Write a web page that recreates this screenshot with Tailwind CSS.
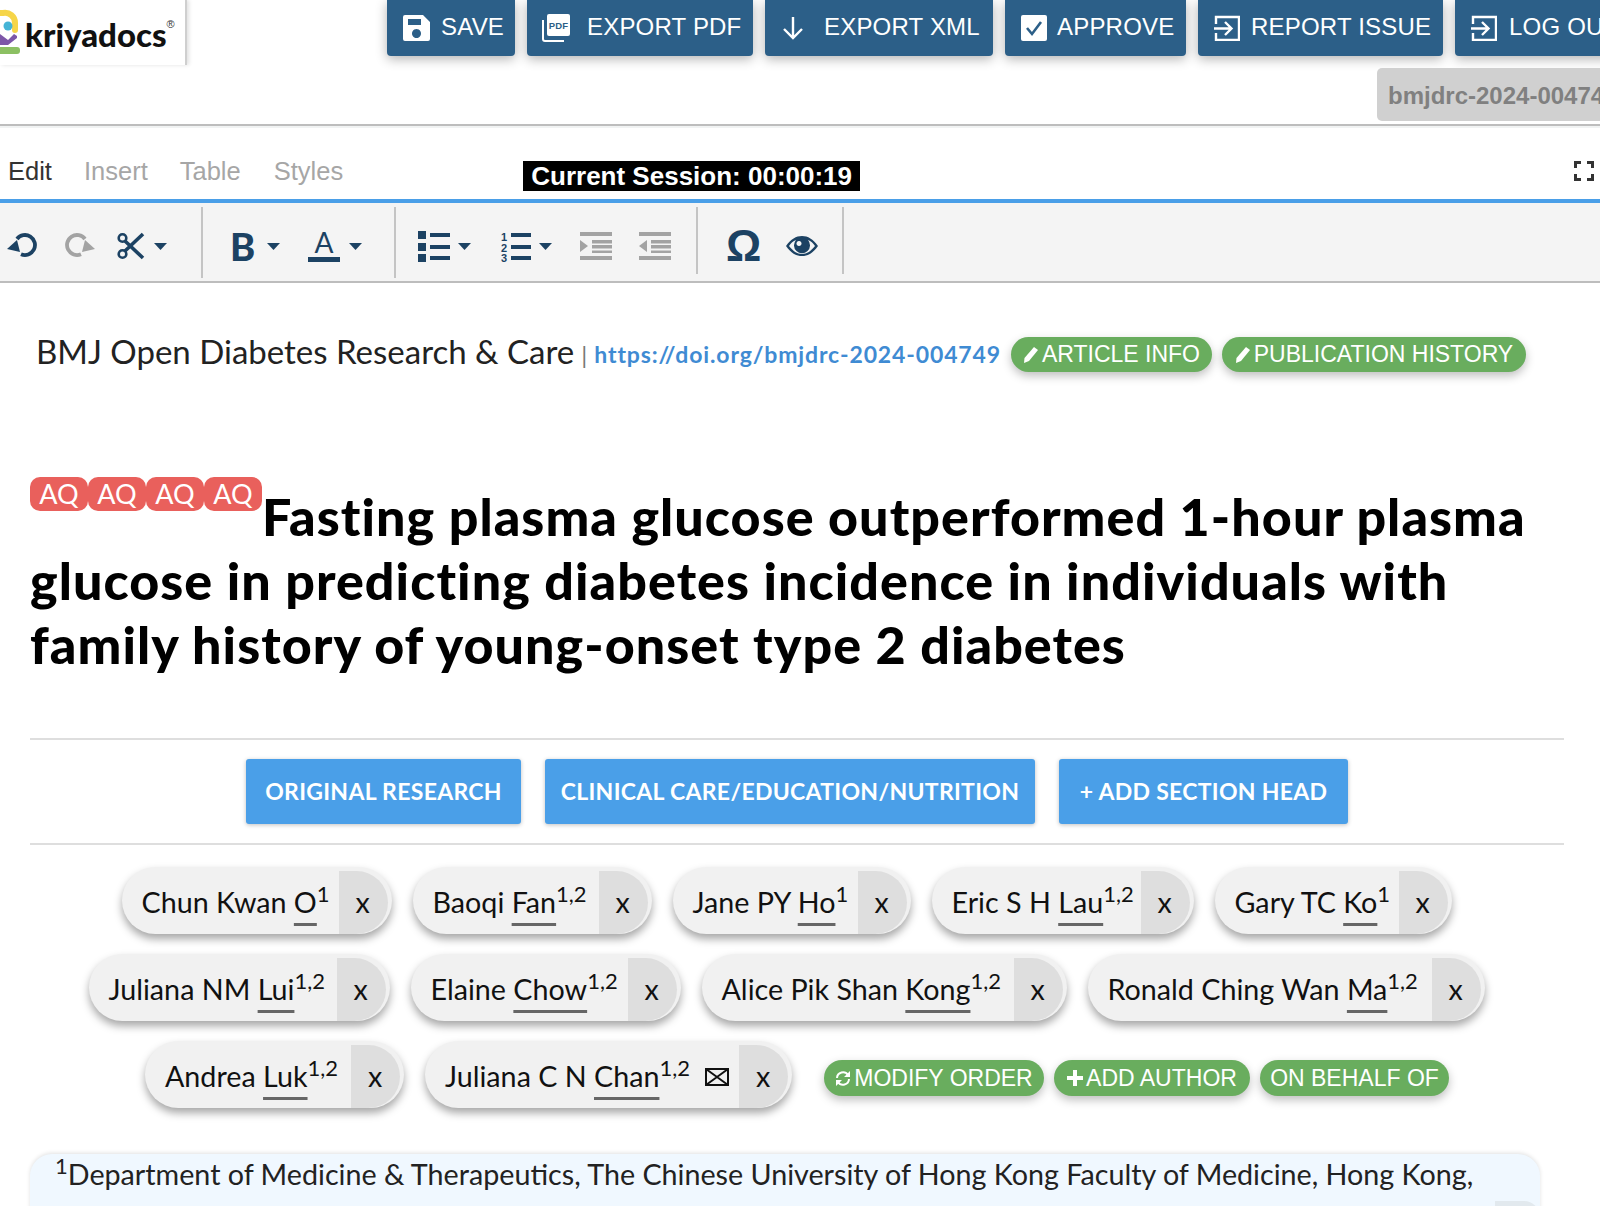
<!DOCTYPE html>
<html lang="en">
<head>
    <meta charset="UTF-8">
    <meta name="viewport" content="width=device-width, initial-scale=1.0">
    <title>Kriyadocs</title>
    <script src="https://cdn.jsdelivr.net/npm/@tailwindcss/browser@4"></script>
</head>
<body class="h-[1206px] overflow-hidden bg-white font-['Lato',sans-serif]">
    <!-- top bar -->
    <header class="h-[124px] flex items-start overflow-hidden font-['Liberation_Sans',sans-serif]">
        <div class="w-[187px] h-[65px] shrink-0 border-r-2 border-[#cfcfcf] shadow-[2px_0_4px_rgba(0,0,0,0.12)] flex items-start">
            <svg width="24" height="56" viewBox="0 0 24 56" class="shrink-0">
                <path d="M0 13 H3 A10 10 0 0 1 15 23 V30" fill="none" stroke="#f6d549" stroke-width="6" stroke-linecap="round"/>
                <circle cx="8" cy="26" r="4.5" fill="#45b4d6"/>
                <path d="M0 34 L8 40 L14 34 L17 36 V38 L8 45 H0 Z" fill="#7d57a8"/>
                <rect x="-6" y="47" width="26" height="7" rx="3" fill="#8cc063"/>
            </svg>
            <span class="ml-[1px] mt-[12px] text-[33px] leading-[44px] font-black text-[#111] font-['Lato',sans-serif]">kriyadocs</span>
            <span class="text-[11px] mt-[16px] text-[#333]">®</span>
        </div>
        <div class="flex gap-3 ml-[200px] shrink-0 text-white text-[24px] tracking-[0.2px]">
            <button class="h-14 w-[128px] flex items-center pb-[2px] pl-4 gap-[11px] bg-[#2c5f88] rounded-b-[4px] shadow-[0_3px_12px_rgba(0,0,0,0.3)]">
                <svg width="27" height="26" viewBox="0 0 27 26" class="mt-[2px]"><path fill="#fff" fill-rule="evenodd" d="M2 0H20L27 7V24a2 2 0 0 1-2 2H2a2 2 0 0 1-2-2V2a2 2 0 0 1 2-2zM5 4V10H18V4zM13.5 14a4.5 4.5 0 1 0 .01 0z"/></svg>
                SAVE
            </button>
            <button class="h-14 w-[226px] flex items-center pb-[2px] pl-[15px] gap-[17px] bg-[#2c5f88] rounded-b-[4px] shadow-[0_3px_12px_rgba(0,0,0,0.3)]">
                <svg width="28" height="28" viewBox="0 0 28 28" class="mt-[2px]"><path d="M1 6V25a2 2 0 0 0 2 2H22" fill="none" stroke="#fff" stroke-width="2"/><rect x="5" y="0" width="23" height="22" rx="2" fill="#fff"/><text x="16.5" y="15" text-anchor="middle" font-size="9.5" font-weight="700" fill="#2c5f88" font-family="Liberation Sans">PDF</text></svg>
                EXPORT PDF
            </button>
            <button class="h-14 w-[228px] flex items-center pb-[2px] pl-[18px] gap-[21px] bg-[#2c5f88] rounded-b-[4px] shadow-[0_3px_12px_rgba(0,0,0,0.3)]">
                <svg width="20" height="24" viewBox="0 0 20 24" class="mt-[2px]"><path d="M10 1V22M1 13L10 22L19 13" fill="none" stroke="#fff" stroke-width="2.4"/></svg>
                EXPORT XML
            </button>
            <button class="h-14 w-[181px] flex items-center pb-[2px] pl-4 gap-[10px] bg-[#2c5f88] rounded-b-[4px] shadow-[0_3px_12px_rgba(0,0,0,0.3)]">
                <svg width="26" height="26" viewBox="0 0 26 26" class="mt-[2px]"><rect width="26" height="26" rx="2" fill="#fff"/><path d="M6 13L11 19L20 7" fill="none" stroke="#2c5f88" stroke-width="2.6"/></svg>
                APPROVE
            </button>
            <button class="h-14 w-[245px] flex items-center pb-[2px] pl-4 gap-[11px] bg-[#2c5f88] rounded-b-[4px] shadow-[0_3px_12px_rgba(0,0,0,0.3)]">
                <svg width="26" height="26" viewBox="0 0 26 26" class="mt-[2px]"><path d="M2 9V2H25V25H2V18M0 13.500H17M11 7L17.500 13.500L11 20" fill="none" stroke="#fff" stroke-width="2.4"/></svg>
                REPORT ISSUE
            </button>
            <button class="h-14 flex items-center pb-[2px] pl-4 pr-[14px] gap-3 bg-[#2c5f88] rounded-b-[4px] shadow-[0_3px_12px_rgba(0,0,0,0.3)]">
                <svg width="26" height="26" viewBox="0 0 26 26" class="mt-[2px]"><path d="M2 9V2H25V25H2V18M0 13.500H17M11 7L17.500 13.500L11 20" fill="none" stroke="#fff" stroke-width="2.4"/></svg>
                LOG OUT
            </button>
        </div>
    </header>
    <div class="relative h-0">
        <div class="absolute left-[1377px] top-[-56px] h-[53px] w-[223px] pl-[11px] pt-[2px] flex items-center overflow-hidden bg-[#d0d0d0] rounded-l-[5px] text-[24px] font-bold text-[#808080] font-['Liberation_Sans',sans-serif] whitespace-nowrap">bmjdrc-2024-004749</div>
    </div>
    <div class="h-1 border-t-2 border-[#bdbdbd] bg-[#f1f3f3]"></div>

    <!-- tabs -->
    <div class="h-[71px] flex items-start font-['Liberation_Sans',sans-serif] text-[25.5px] text-[#a6a6a6]">
        <span class="ml-[8px] mt-[24px] text-[#333]">Edit</span>
        <span class="ml-[32px] mt-[24px]">Insert</span>
        <span class="ml-[32px] mt-[24px]">Table</span>
        <span class="ml-[33px] mt-[24px]">Styles</span>
        <span class="ml-[180px] mt-[33px] h-[30px] w-[337px] flex items-center justify-center bg-black text-white font-bold text-[26px]">Current Session: 00:00:19</span>
        <svg width="20" height="20" viewBox="0 0 20 20" class="ml-auto mr-[6px] mt-[33px]"><path d="M1.500 7V1.500H7M13 1.500H18.500V7M18.500 13V18.500H13M7 18.500H1.500V13" fill="none" stroke="#333" stroke-width="3"/></svg>
    </div>

    <!-- toolbar -->
    <div class="h-[84px] border-t-[4px] border-b-2 border-t-[#4a9fe8] border-b-[#bdbdbd] bg-[#f4f4f4] flex items-start">
        <div class="w-[201px] h-full pt-2 flex items-center">
            <svg width="30" height="26" viewBox="0 0 30 26" class="ml-[7px]"><path d="M10 6A10 10 0 1 1 14 21.200" fill="none" stroke="#1c4263" stroke-width="3.800"/><path d="M0 16L10 7L13 19Z" fill="#1c4263"/></svg>
            <svg width="30" height="26" viewBox="0 0 30 26" class="ml-[28px] -scale-x-100"><path d="M10 6A10 10 0 1 1 14 21.200" fill="none" stroke="#a3a3a3" stroke-width="3.800"/><path d="M0 16L10 7L13 19Z" fill="#a3a3a3"/></svg>
            <svg width="28" height="28" viewBox="0 0 28 28" class="ml-[22px]"><circle cx="5.500" cy="6" r="3.800" fill="none" stroke="#1c4263" stroke-width="2.600"/><circle cx="5.500" cy="22" r="3.800" fill="none" stroke="#1c4263" stroke-width="2.600"/><path d="M8 9L26 26M8 19L26 2" stroke="#1c4263" stroke-width="3.600"/></svg>
            <svg width="13" height="7" viewBox="0 0 13 7" class="ml-[9px]"><path d="M0 0H13L6.500 7Z" fill="#1c4263"/></svg>
        </div>
        <div class="w-[2px] h-[71px] mt-1 bg-[#c4c4c4]"></div>
        <div class="w-[191px] h-full pt-2 flex items-center">
            <span class="ml-[27px] w-[24px] text-[38px] leading-none font-black text-[#1c4263] font-['Lato',sans-serif]">B</span>
            <svg width="13" height="7" viewBox="0 0 13 7" class="ml-[13px]"><path d="M0 0H13L6.500 7Z" fill="#1c4263"/></svg>
            <span class="ml-[28px] w-[32px] pb-[2px] border-b-[5px] border-[#1c4263] text-center text-[28px] leading-[25px] text-[#1c4263]">A</span>
            <svg width="13" height="7" viewBox="0 0 13 7" class="ml-[9px]"><path d="M0 0H13L6.500 7Z" fill="#1c4263"/></svg>
        </div>
        <div class="w-[2px] h-[71px] mt-1 bg-[#c4c4c4]"></div>
        <div class="w-[300px] h-full pt-2 flex items-center">
            <svg width="32" height="31" viewBox="0 0 32 31" class="ml-[22px]"><path fill="#1c4263" d="M0 0H8V8H0zM0 12H8V20H0zM0 23H8V31H0zM12 2H32V6H12zM12 14H32V18H12zM12 25H32V29H12z"/></svg>
            <svg width="13" height="7" viewBox="0 0 13 7" class="ml-[8px]"><path d="M0 0H13L6.500 7Z" fill="#1c4263"/></svg>
            <svg width="30" height="31" viewBox="0 0 30 31" class="ml-[30px]"><text x="0" y="10" font-size="11" font-weight="700" fill="#1c4263" font-family="Liberation Sans">1</text><text x="0" y="20.500" font-size="11" font-weight="700" fill="#1c4263" font-family="Liberation Sans">2</text><text x="0" y="31" font-size="11" font-weight="700" fill="#1c4263" font-family="Liberation Sans">3</text><path fill="#1c4263" d="M10 2H30V6H10zM10 14H30V18H10zM10 25H30V29H10z"/></svg>
            <svg width="13" height="7" viewBox="0 0 13 7" class="ml-[8px]"><path d="M0 0H13L6.500 7Z" fill="#1c4263"/></svg>
            <svg width="32" height="28" viewBox="0 0 32 28" class="ml-[28px]"><path fill="#a3a3a3" d="M0 0H32V4H0zM12 8H32V11.500H12zM12 13H32V16.500H12zM12 18.500H32V21H12zM0 24H32V28H0zM0 8L8 14L0 20Z"/></svg>
            <svg width="32" height="28" viewBox="0 0 32 28" class="ml-[27px]"><path fill="#a3a3a3" d="M0 0H32V4H0zM12 8H32V11.500H12zM12 13H32V16.500H12zM12 18.500H32V21H12zM0 24H32V28H0zM8 8L0 14L8 20Z"/></svg>
        </div>
        <div class="w-[2px] h-[67px] mt-1 bg-[#c4c4c4]"></div>
        <div class="w-[144px] h-full pt-2 flex items-center">
            <span class="ml-[28px] w-[35px] text-center text-[44px] leading-none font-['Liberation_Sans',sans-serif] text-[#1c4263] font-bold">Ω</span>
            <svg width="32" height="20" viewBox="0 0 32 20" class="ml-[25px]"><path fill="#1c4263" fill-rule="evenodd" d="M0 10C5 3 10 0 16 0s11 3 16 10c-5 7-10 10-16 10S5 17 0 10zM3 10c4 5 8 8 13 8s9-3 13-8c-2-3-4-5-7-6a8 8 0 1 1-12 0c-3 1-5 3-7 6zM13 5a2.500 2.500 0 1 0 .01 0z"/></svg>
        </div>
        <div class="w-[2px] h-[67px] mt-1 bg-[#c4c4c4]"></div>
    </div>

    <main class="px-[30px]">
        <!-- journal line -->
        <div class="mt-[54px] pl-[6px] h-[35px] flex items-center whitespace-nowrap">
            <span class="text-[33px] text-[#222] mb-[5px]">BMJ Open Diabetes Research &amp; Care</span>
            <span class="ml-[7px] text-[24px] text-[#777]">|</span>
            <a class="ml-[7px] text-[23px] font-bold tracking-[0.87px] text-[#3f8bd3]">https://doi.org/bmjdrc-2024-004749</a>
            <button class="ml-[10px] h-[35px] w-[201px] flex items-center justify-center gap-[3px] rounded-full bg-[#69ad5e] text-white text-[23px] font-['Liberation_Sans',sans-serif] shadow-[0_4px_10px_rgba(0,0,0,0.25)]">
                <svg width="16" height="17" viewBox="0 0 16 17"><path d="M11 1L15 4L6 15L1 17L1.500 12Z" fill="#fff"/></svg>ARTICLE INFO
            </button>
            <button class="ml-[10px] h-[35px] w-[304px] flex items-center justify-center gap-[3px] rounded-full bg-[#69ad5e] text-white text-[23px] font-['Liberation_Sans',sans-serif] shadow-[0_4px_10px_rgba(0,0,0,0.25)]">
                <svg width="16" height="17" viewBox="0 0 16 17"><path d="M11 1L15 4L6 15L1 17L1.500 12Z" fill="#fff"/></svg>PUBLICATION HISTORY
            </button>
        </div>

        <!-- title -->
        <h1 class="mt-[105px] text-[52px] leading-[64px] tracking-[1.05px] font-black text-black">
            <span class="inline-flex align-[32px] tracking-normal font-normal text-[27px] leading-[34px] text-white"><span class="w-[58px] text-center rounded-[10px] bg-[#e9605c]">AQ</span><span class="w-[58px] text-center rounded-[10px] bg-[#e9605c]">AQ</span><span class="w-[58px] text-center rounded-[10px] bg-[#e9605c]">AQ</span><span class="w-[58px] text-center rounded-[10px] bg-[#e9605c]">AQ</span></span>Fasting plasma glucose outperformed 1-hour plasma glucose in predicting diabetes incidence in individuals with family history of young-onset type 2 diabetes
        </h1>

        <!-- section heads -->
        <div class="mt-[62px] w-[1534px] border-y-2 border-[#dedede] h-[107px] flex items-center justify-center gap-6 text-[23px] tracking-[0.3px] font-bold text-white">
            <button class="h-[65px] w-[275px] rounded-[3px] bg-[#4a9fe8] shadow-[0_1px_4px_rgba(0,0,0,0.25)]">ORIGINAL RESEARCH</button>
            <button class="h-[65px] w-[490px] rounded-[3px] bg-[#4a9fe8] shadow-[0_1px_4px_rgba(0,0,0,0.25)]">CLINICAL CARE/EDUCATION/NUTRITION</button>
            <button class="h-[65px] w-[289px] rounded-[3px] bg-[#4a9fe8] shadow-[0_1px_4px_rgba(0,0,0,0.25)]">+ ADD SECTION HEAD</button>
        </div>

        <!-- authors -->
        <div class="mt-[22px] w-[1534px] flex flex-wrap justify-center items-center gap-y-5 text-[28.7px] text-[#111]">
            <div class="mr-[21px] h-[67px] w-[270px] flex rounded-full bg-[#f1f1f1] pt-1 pr-1 shadow-[0_5px_8px_rgba(0,0,0,0.35)]"><span class="flex-1 pl-5 leading-[62px] whitespace-nowrap">Chun Kwan <span class="underline decoration-[#666] decoration-[3px] underline-offset-[10px] [text-decoration-skip-ink:none]">O</span><sup class="text-[22px]">1</sup></span><span class="w-[49px] shrink-0 bg-[#dedede] rounded-r-full pl-[17px] leading-[62px]">x</span></div>
            <div class="mr-[21px] h-[67px] w-[239px] flex rounded-full bg-[#f1f1f1] pt-1 pr-1 shadow-[0_5px_8px_rgba(0,0,0,0.35)]"><span class="flex-1 pl-5 leading-[62px] whitespace-nowrap">Baoqi <span class="underline decoration-[#666] decoration-[3px] underline-offset-[10px] [text-decoration-skip-ink:none]">Fan</span><sup class="text-[22px]">1,2</sup></span><span class="w-[49px] shrink-0 bg-[#dedede] rounded-r-full pl-[17px] leading-[62px]">x</span></div>
            <div class="mr-[21px] h-[67px] w-[238px] flex rounded-full bg-[#f1f1f1] pt-1 pr-1 shadow-[0_5px_8px_rgba(0,0,0,0.35)]"><span class="flex-1 pl-5 leading-[62px] whitespace-nowrap">Jane PY <span class="underline decoration-[#666] decoration-[3px] underline-offset-[10px] [text-decoration-skip-ink:none]">Ho</span><sup class="text-[22px]">1</sup></span><span class="w-[49px] shrink-0 bg-[#dedede] rounded-r-full pl-[17px] leading-[62px]">x</span></div>
            <div class="mr-[21px] h-[67px] w-[262px] flex rounded-full bg-[#f1f1f1] pt-1 pr-1 shadow-[0_5px_8px_rgba(0,0,0,0.35)]"><span class="flex-1 pl-5 leading-[62px] whitespace-nowrap">Eric S H <span class="underline decoration-[#666] decoration-[3px] underline-offset-[10px] [text-decoration-skip-ink:none]">Lau</span><sup class="text-[22px]">1,2</sup></span><span class="w-[49px] shrink-0 bg-[#dedede] rounded-r-full pl-[17px] leading-[62px]">x</span></div>
            <div class="mr-[21px] h-[67px] w-[237px] flex rounded-full bg-[#f1f1f1] pt-1 pr-1 shadow-[0_5px_8px_rgba(0,0,0,0.35)]"><span class="flex-1 pl-5 leading-[62px] whitespace-nowrap">Gary TC <span class="underline decoration-[#666] decoration-[3px] underline-offset-[10px] [text-decoration-skip-ink:none]">Ko</span><sup class="text-[22px]">1</sup></span><span class="w-[49px] shrink-0 bg-[#dedede] rounded-r-full pl-[17px] leading-[62px]">x</span></div>

            <div class="mr-[21px] h-[67px] w-[301px] flex rounded-full bg-[#f1f1f1] pt-1 pr-1 shadow-[0_5px_8px_rgba(0,0,0,0.35)]"><span class="flex-1 pl-5 leading-[62px] whitespace-nowrap">Juliana NM <span class="underline decoration-[#666] decoration-[3px] underline-offset-[10px] [text-decoration-skip-ink:none]">Lui</span><sup class="text-[22px]">1,2</sup></span><span class="w-[49px] shrink-0 bg-[#dedede] rounded-r-full pl-[17px] leading-[62px]">x</span></div>
            <div class="mr-[21px] h-[67px] w-[270px] flex rounded-full bg-[#f1f1f1] pt-1 pr-1 shadow-[0_5px_8px_rgba(0,0,0,0.35)]"><span class="flex-1 pl-5 leading-[62px] whitespace-nowrap">Elaine <span class="underline decoration-[#666] decoration-[3px] underline-offset-[10px] [text-decoration-skip-ink:none]">Chow</span><sup class="text-[22px]">1,2</sup></span><span class="w-[49px] shrink-0 bg-[#dedede] rounded-r-full pl-[17px] leading-[62px]">x</span></div>
            <div class="mr-[21px] h-[67px] w-[365px] flex rounded-full bg-[#f1f1f1] pt-1 pr-1 shadow-[0_5px_8px_rgba(0,0,0,0.35)]"><span class="flex-1 pl-5 leading-[62px] whitespace-nowrap">Alice Pik Shan <span class="underline decoration-[#666] decoration-[3px] underline-offset-[10px] [text-decoration-skip-ink:none]">Kong</span><sup class="text-[22px]">1,2</sup></span><span class="w-[49px] shrink-0 bg-[#dedede] rounded-r-full pl-[17px] leading-[62px]">x</span></div>
            <div class="mr-[21px] h-[67px] w-[397px] flex rounded-full bg-[#f1f1f1] pt-1 pr-1 shadow-[0_5px_8px_rgba(0,0,0,0.35)]"><span class="flex-1 pl-5 leading-[62px] whitespace-nowrap">Ronald Ching Wan <span class="underline decoration-[#666] decoration-[3px] underline-offset-[10px] [text-decoration-skip-ink:none]">Ma</span><sup class="text-[22px]">1,2</sup></span><span class="w-[49px] shrink-0 bg-[#dedede] rounded-r-full pl-[17px] leading-[62px]">x</span></div>

            <div class="mr-[21px] h-[67px] w-[259px] flex rounded-full bg-[#f1f1f1] pt-1 pr-1 shadow-[0_5px_8px_rgba(0,0,0,0.35)]"><span class="flex-1 pl-5 leading-[62px] whitespace-nowrap">Andrea <span class="underline decoration-[#666] decoration-[3px] underline-offset-[10px] [text-decoration-skip-ink:none]">Luk</span><sup class="text-[22px]">1,2</sup></span><span class="w-[49px] shrink-0 bg-[#dedede] rounded-r-full pl-[17px] leading-[62px]">x</span></div>
            <div class="mr-[21px] h-[67px] w-[367px] flex rounded-full bg-[#f1f1f1] pt-1 pr-1 shadow-[0_5px_8px_rgba(0,0,0,0.35)]"><span class="flex-1 pl-5 leading-[62px] whitespace-nowrap">Juliana C N <span class="underline decoration-[#666] decoration-[3px] underline-offset-[10px] [text-decoration-skip-ink:none]">Chan</span><sup class="text-[22px]">1,2</sup></span>
                <svg width="24" height="18" viewBox="0 0 24 18" class="self-center mr-[10px]"><path d="M1 1H23V17H1zM1 1L23 17M23 1L1 17" fill="none" stroke="#111" stroke-width="2"/></svg><span class="w-[49px] shrink-0 bg-[#dedede] rounded-r-full pl-[17px] leading-[62px]">x</span></div>
            <div class="ml-[11px] mt-[7px] flex gap-[10px] text-white text-[23px] font-['Liberation_Sans',sans-serif]">
                <button class="h-9 w-[220px] flex items-center justify-center gap-[3px] rounded-full bg-[#69ad5e] shadow-[0_4px_10px_rgba(0,0,0,0.25)]">
                    <svg width="16" height="17" viewBox="0 0 16 17"><path d="M2 8A6 6 0 0 1 13 5M14 9A6 6 0 0 1 3 12" fill="none" stroke="#fff" stroke-width="2"/><path d="M15 1V7H9ZM1 16V10H7Z" fill="#fff"/></svg>MODIFY ORDER
                </button>
                <button class="h-9 w-[196px] flex items-center justify-center gap-[3px] rounded-full bg-[#69ad5e] shadow-[0_4px_10px_rgba(0,0,0,0.25)]">
                    <svg width="16" height="16" viewBox="0 0 16 16"><path d="M8 0V16M0 8H16" stroke="#fff" stroke-width="4"/></svg>ADD AUTHOR
                </button>
                <button class="h-9 w-[189px] flex items-center justify-center rounded-full bg-[#69ad5e] shadow-[0_4px_10px_rgba(0,0,0,0.25)]">ON BEHALF OF</button>
            </div>
        </div>

        <!-- affiliations -->
        <div class="mt-[46px] w-[1510px] h-[80px] relative rounded-t-[22px] bg-[#f0f8ff] pl-[25px] text-[28.7px] leading-[40px] text-[#222] shadow-[0_-1px_4px_rgba(0,0,0,0.12)] whitespace-nowrap">
            <sup class="text-[22px]">1</sup>Department of Medicine &amp; Therapeutics, The Chinese University of Hong Kong Faculty of Medicine, Hong Kong,
            <div class="absolute right-0 top-[47px] w-[45px] h-[30px] bg-[#e2e9ee] rounded-tr-[16px]"></div>
        </div>
    </main>
</body>
</html>
